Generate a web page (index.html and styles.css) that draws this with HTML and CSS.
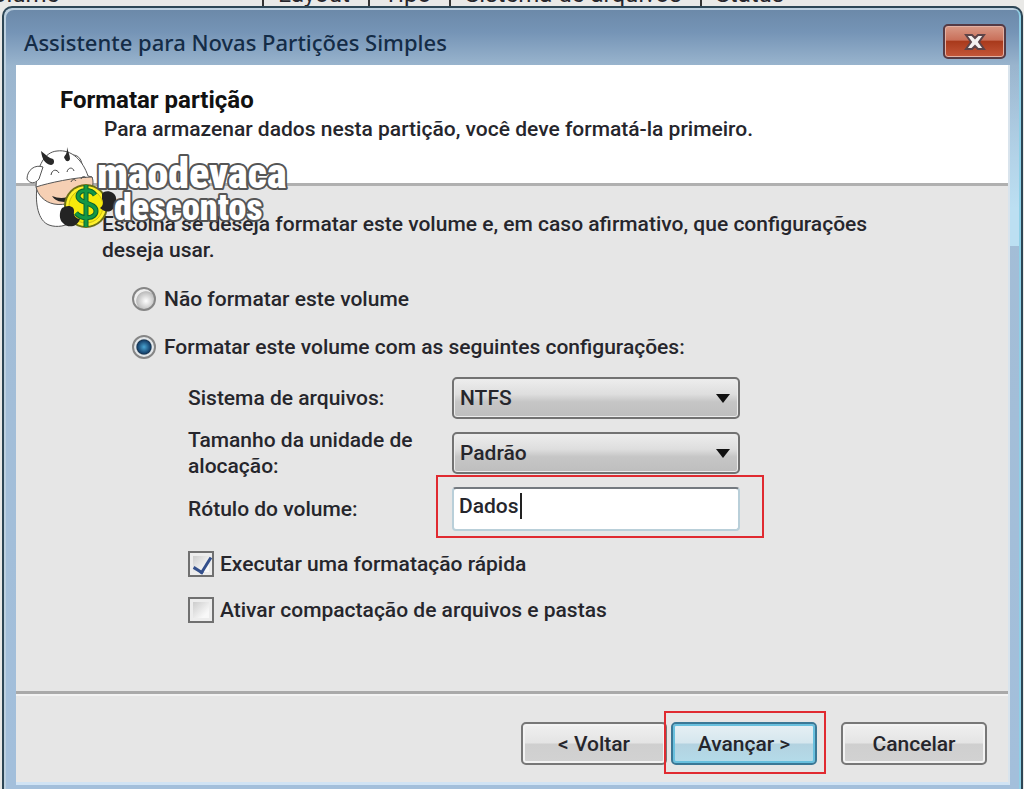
FILE: index.html
```html
<!DOCTYPE html>
<html lang="pt-BR">
<head>
    <meta charset="UTF-8">
    <meta name="viewport" content="width=device-width, initial-scale=1.0">
    <title>Assistente para Novas Partições Simples</title>
    <link rel="stylesheet" href="styles.css">
</head>
<body>

    <div class="columns">
        <span class="col-volume">Volume</span>
        <span class="col">Layout</span>
        <span class="col">Tipo</span>
        <span class="col">Sistema de arquivos</span>
        <span class="col">Status</span>
    </div>

    <div class="window">
        <div class="titlebar">
            <span class="title">Assistente para Novas Partições Simples</span>
            <button type="button" class="close" aria-label="Fechar">
                <svg width="24" height="18" viewBox="0 0 24 18">
                    <path d="M3 2h6l3 3 3-3h6l-5 7 5 7h-6l-3-3-3 3H3l5-7z" fill="#f4f1f0" stroke="#5d4448" stroke-width="2"/>
                </svg>
            </button>
        </div>

        <form class="client">
            <div class="header">
                <h1>Formatar partição</h1>
                <p>Para armazenar dados nesta partição, você deve formatá-la primeiro.</p>

                <svg class="logo" width="270" height="90" viewBox="0 0 270 90" role="img" aria-label="maodevaca descontos">
                    <g stroke="#555" stroke-width="1" fill="#fff">
                        <path d="M11 40C9 56 12 74 23 78c8 3 18 1 24-4L56 42z"/>
                        <path d="M47 8c6 0 10 6 9 14-5-1-8-5-9-9z"/>
                        <path d="M10 40C11 18 19 5 31 4c15-2 26 10 31 25l4 1-2 14-30 12z"/>
                        <path d="M17 20C9 17 1 23 1 32c3 5 8 5 12 0z"/>
                        <path d="M10 40c12-4 40-10 56-10 2 5 1 11-3 16-8 9-25 13-35 11-10-2-16-9-18-17z" fill="#f6d0b4"/>
                    </g>
                    <path d="M15 4c5 4 8 7 12 8 2 2 1 6-2 6-6-1-9-6-10-14zM41 0c1 5 3 8 3 12-1 3-4 3-5 0-2-2 0-3 1-5 1-2 1-4 1-7z" fill="#292929"/>
                    <path d="M25 28c1-6 6-6 8-2M41 25c1-5 6-5 7-1M45 35c1-3 4-3 5-1M55 32c1-3 4-3 5-1" fill="none" stroke="#444" stroke-width="1"/>
                    <path d="M26 49c7 3 14 2 20 0v5c-9 2-16 1-20-5z" fill="#252525"/>
                    <circle cx="60" cy="59" r="22" fill="#6c7016"/>
                    <circle cx="60" cy="59" r="20" fill="#fff12b"/>
                    <circle cx="60" cy="59" r="17" fill="#f7ea0b" stroke="#cbbd12"/>
                    <path d="M69 48c-4-6-16-6-17 1 0 8 18 6 18 15 0 8-14 9-20 2M60 38v42" fill="none" stroke="#0a632f" stroke-width="5"/>
                    <path d="M69 48c-4-6-16-6-17 1 0 8 18 6 18 15 0 8-14 9-20 2M60 38v42" fill="none" stroke="#139745" stroke-width="3"/>
                    <path d="M36 61c6-4 13-2 12 4-1 4 3 7 6 7-3 9-13 9-17 4-4-3-4-11-1-15zM76 47c1-3 7-4 11-1 5 3 4 13-1 17-4 3-9 1-12-2 3-2 4-5 2-9z" fill="#242424"/>
                    <text x="71" y="41" class="logo-text logo-top">maodevaca</text>
                    <text x="88" y="73" class="logo-text logo-bottom">descontos</text>
                </svg>
            </div>

            <div class="content">
                <p class="intro">Escolha se deseja formatar este volume e, em caso afirmativo, que configurações deseja usar.</p>

                <div class="option">
                    <input type="radio" id="noFormat" name="format" value="no">
                    <label for="noFormat">Não formatar este volume</label>
                </div>
                <div class="option">
                    <input type="radio" id="doFormat" name="format" value="yes" checked>
                    <label for="doFormat">Formatar este volume com as seguintes configurações:</label>
                </div>

                <div class="settings">
                    <label for="fileSystem">Sistema de arquivos:</label>
                    <div class="select-box">
                        <select id="fileSystem" name="fileSystem">
                            <option>NTFS</option>
                        </select>
                    </div>

                    <label for="unitSize">Tamanho da unidade de alocação:</label>
                    <div class="select-box">
                        <select id="unitSize" name="unitSize">
                            <option>Padrão</option>
                        </select>
                    </div>

                    <label for="volumeLabel">Rótulo do volume:</label>
                    <div class="text-box marked">
                        <input type="text" id="volumeLabel" name="volumeLabel" value="Dados">
                    </div>
                </div>

                <div class="check">
                    <input type="checkbox" id="quick" name="quick" checked>
                    <label for="quick">Executar uma formatação rápida</label>
                </div>
                <div class="check">
                    <input type="checkbox" id="compress" name="compress">
                    <label for="compress">Ativar compactação de arquivos e pastas</label>
                </div>
            </div>

            <div class="footer">
                <button type="button" class="btn">&lt; Voltar</button>
                <div class="marked">
                    <button type="button" class="btn btn-default">Avançar &gt;</button>
                </div>
                <button type="button" class="btn btn-cancel">Cancelar</button>
            </div>
        </form>
    </div>

</body>
</html>
```

FILE: styles.css
```css
* {
    box-sizing: border-box;
}
body {
    margin: 0;
    min-height: 100vh;
    display: flex;
    flex-direction: column;
    background: #e9e9e7;
    color: #26262c;
    font-family: Roboto, "Liberation Sans", sans-serif;
    font-size: 21px;
    font-weight: 500;
    line-height: 26px;
}
h1, p {
    margin: 0;
}

/* Column headings of the window behind */
.columns {
    display: flex;
    align-items: flex-end;
    height: 6px;
    overflow: hidden;
    white-space: nowrap;
    font-size: 24px;
    font-weight: 400;
    line-height: 24px;
}
.col-volume {
    width: 262px;
    text-indent: -22px;
}
.col {
    border-left: 2px solid #333;
    padding: 0 18px 0 14px;
}

.window {
    flex: 1;
    display: flex;
    flex-direction: column;
    padding: 0 11px 4px 12px;
    margin: 0 1px 0 2px;
    border: 2px solid #2d4655;
    border-bottom: 0;
    border-radius: 10px 10px 0 0;
    background:
        linear-gradient(transparent 60px, #bcdff2 200px) right top / 11px 238px no-repeat,
        linear-gradient(#6b88a8, #7594b6 24px, #9ab5ce 58px, #a3bdd6 150px, #a3bfdb);
    box-shadow: inset 2px 2px 0 #bdd0df, inset -2px 0 0 #8fd0e6;
}
.titlebar {
    display: flex;
    align-items: center;
    justify-content: space-between;
    height: 57px;
    padding: 10px 4px 0 8px;
}
.title {
    font-family: "Noto Sans", "Open Sans", sans-serif;
    font-size: 22px;
    color: #142c47;
}
.close {
    display: flex;
    align-items: center;
    justify-content: center;
    width: 63px;
    height: 35px;
    padding: 0;
    border: 2px solid #553b45;
    border-radius: 5px;
    background: linear-gradient(#d99a87, #c9705a 45%, #a93a1c 50%, #c4573a);
    box-shadow: inset 0 0 0 1px #e3b1a4;
}

.client {
    flex: 1;
    display: flex;
    flex-direction: column;
    background: #e6e6e6;
    border-right: 2px solid #d9e4ed;
    border-bottom: 3px solid #d0e3f4;
}
.header {
    position: relative;
    height: 121px;
    padding: 21px 44px 0;
    background: #fff;
    border-bottom: 3px solid #b0b0b0;
}
.header h1 {
    font-size: 24px;
    line-height: 28px;
    color: #111;
}
.header p {
    padding: 2px 0 0 44px;
}
.logo {
    position: absolute;
    left: 10px;
    top: 82px;
}
.logo-text {
    font-family: "Roboto Condensed", "DejaVu Sans Condensed", sans-serif;
    font-weight: 900;
    fill: #fff;
    stroke: #555;
    stroke-width: 4px;
    stroke-linejoin: round;
    paint-order: stroke;
}
.logo-top {
    font-size: 42px;
}
.logo-bottom {
    font-size: 36px;
}

.content {
    flex: 1;
    padding: 25px 120px 0 86px;
}
.intro {
    margin-bottom: 12px;
}
.option {
    display: flex;
    align-items: center;
    gap: 8px;
    height: 48px;
    margin-left: 30px;
}
input[type="radio"], input[type="checkbox"] {
    appearance: none;
    margin: 0;
    width: 24px;
    height: 24px;
    border: 2px solid #868686;
    background: #f4f4f4;
}
input[type="radio"] {
    border-radius: 50%;
    background: radial-gradient(circle at 60% 60%, #fff, #bcbcbc 55%, #eee 60%);
}
input[type="radio"]:checked {
    background: radial-gradient(circle, #4aa5d3, #16436e 45%, #183550 50%, #e3e7ea 58%);
}

.settings {
    display: grid;
    grid-template-columns: 240px 288px;
    column-gap: 24px;
    row-gap: 8px;
    align-items: center;
    margin: 6px 0 10px 86px;
}
.select-box, .text-box, .marked {
    position: relative;
}
select {
    appearance: none;
    display: block;
    width: 100%;
    height: 42px;
    padding: 0 6px;
    border: 2px solid #727272;
    border-radius: 5px;
    background: linear-gradient(#ededed, #dedede 40%, #c6c6c6 60%, #bebebe);
    box-shadow: inset 0 0 0 1px #ececec;
    font: inherit;
    color: inherit;
}
.select-box::after {
    content: "";
    position: absolute;
    right: 10px;
    top: 17px;
    border: 7px solid transparent;
    border-top: 9px solid #111;
    border-bottom: 0;
}
.text-box input {
    display: block;
    width: 100%;
    height: 44px;
    padding: 0 5px 6px;
    border: 2px solid #b9cfd9;
    border-top-color: #747a80;
    border-radius: 4px;
    background: #fff;
    font: inherit;
    color: inherit;
}
/* Text cursor */
.text-box::before {
    content: "";
    position: absolute;
    left: 68px;
    top: 6px;
    width: 2px;
    height: 26px;
    background: #222;
}
.marked::after {
    content: "";
    position: absolute;
    inset: -11px -9px -9px -7px;
    border: 2px solid #e02a30;
    pointer-events: none;
}
.text-box.marked::after {
    inset: -12px -24px -7px -16px;
}

.check {
    display: flex;
    align-items: center;
    gap: 6px;
    height: 46px;
    margin-left: 86px;
}
input[type="checkbox"] {
    width: 26px;
    height: 26px;
    border-color: #707070;
    background: linear-gradient(135deg, #c2c2c2, #f8f8f8 70%);
    box-shadow: inset 0 0 0 3px #ededed;
}
input[type="checkbox"]:checked::after {
    content: "";
    display: block;
    width: 8px;
    height: 16px;
    margin: 1px 0 0 7px;
    border: solid #34508c;
    border-width: 0 3px 3px 0;
    transform: rotate(32deg);
}

.footer {
    display: flex;
    align-items: flex-start;
    justify-content: flex-end;
    height: 91px;
    padding: 28px 21px 0;
    gap: 4px;
    border-top: 3px solid #a9a9a9;
    box-shadow: inset 0 2px 0 #f2f2f2;
}
.btn {
    display: block;
    width: 146px;
    height: 43px;
    padding: 0;
    border: 2px solid #777;
    border-radius: 5px;
    background: linear-gradient(#f0f0f0, #e4e4e4 48%, #cfcfcf 52%, #d2d2d2);
    box-shadow: inset 0 0 0 2px #f3f3f3;
    font: inherit;
    color: inherit;
}
.btn-default {
    border-color: #3b7896;
    background: linear-gradient(#e7f0f4, #d5e6ee 48%, #b3d2e0 52%, #b4dcea);
    box-shadow: inset 0 0 0 2px #69c0de;
}
.btn-cancel {
    margin-left: 20px;
}
```
